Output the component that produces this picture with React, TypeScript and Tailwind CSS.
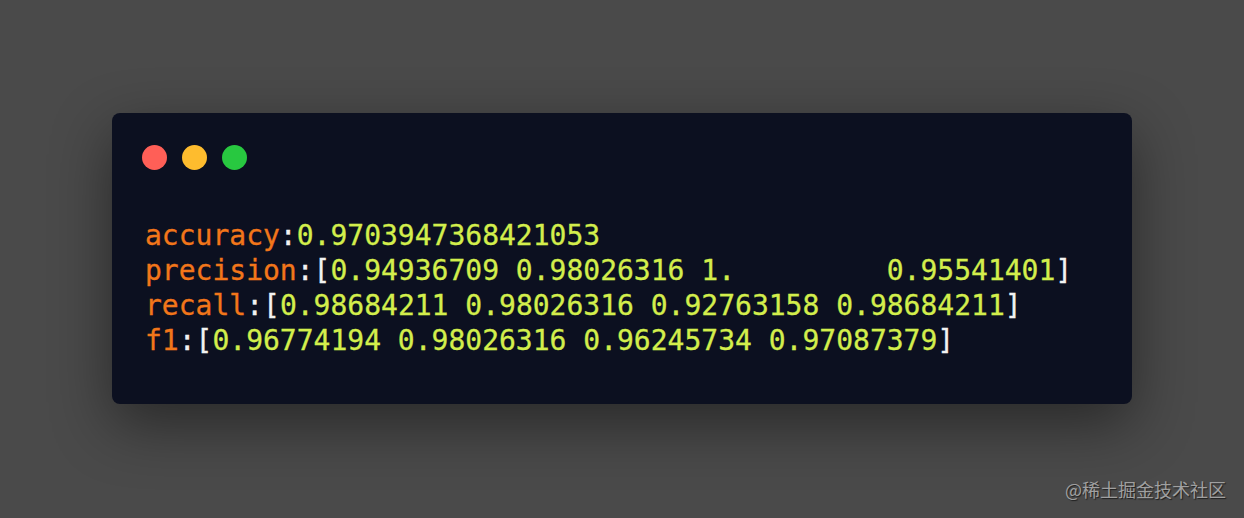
export default function App() {
  const mono = "font-['DejaVu_Sans_Mono',monospace]";
  return (
    <div className="relative flex h-[518px] w-[1244px] items-start justify-center bg-[#4a4a4a] pt-[113px]">
      {/* Terminal window */}
      <div className="h-[291px] w-[1020px] rounded-lg bg-[#0c1020] pl-[30px] pt-[32px] shadow-[0_20px_60px_rgba(0,0,0,0.45)]">
        <div className="flex gap-[15px]">
          <span className="h-[25px] w-[25px] rounded-full bg-[#ff5f57]" />
          <span className="h-[25px] w-[25px] rounded-full bg-[#febc2e]" />
          <span className="h-[25px] w-[25px] rounded-full bg-[#28c840]" />
        </div>
        <pre className={`${mono} mt-[48px] pl-[3px] text-[28px] leading-[35px] text-[#f2f2f2] [-webkit-text-stroke:0.3px_currentColor]`}>
          <div>
            <span className="text-[#f2761a]">accuracy</span>:<span className="text-[#d3ee4c]">0.9703947368421053</span>
          </div>
          <div>
            <span className="text-[#f2761a]">precision</span>:[<span className="text-[#d3ee4c]">0.94936709 0.98026316 1.         0.95541401</span>]
          </div>
          <div>
            <span className="text-[#f2761a]">recall</span>:[<span className="text-[#d3ee4c]">0.98684211 0.98026316 0.92763158 0.98684211</span>]
          </div>
          <div>
            <span className="text-[#f2761a]">f1</span>:[<span className="text-[#d3ee4c]">0.96774194 0.98026316 0.96245734 0.97087379</span>]
          </div>
        </pre>
      </div>

      {/* Watermark */}
      <span className="absolute bottom-[15px] right-[18px] font-['Noto_Sans_CJK_SC',sans-serif] text-[18px] text-[#a0a0a0] [text-shadow:1px_1px_1px_rgba(0,0,0,0.6)]">
        @稀土掘金技术社区
      </span>
    </div>
  );
}
